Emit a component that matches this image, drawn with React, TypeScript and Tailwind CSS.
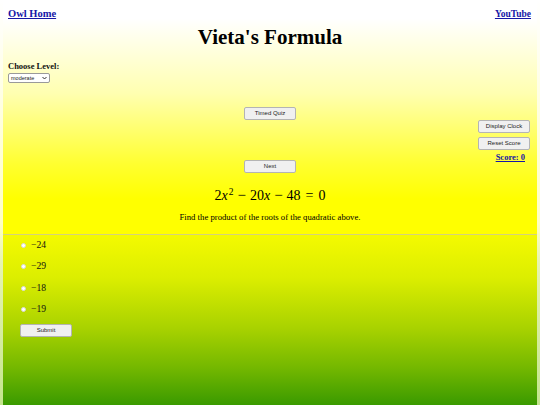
import React from 'react'

const serif = { fontFamily: '"Liberation Serif", "Times New Roman", serif' }

function Btn({ label, className = '' }: { label: string; className?: string }) {
  return (
    <div
      className={`w-[52px] h-[13px] flex items-center justify-center rounded-[2px] border border-[#b4b4b4] bg-[#f0f0f0] text-[6px] text-[#222] ${className}`}
      style={{ fontFamily: '"Liberation Sans", Arial, sans-serif' }}
    >
      {label}
    </div>
  )
}

function Option({ value }: { value: string }) {
  return (
    <div className="flex items-center h-[12px] leading-[12px]">
      <span className="w-[5px] h-[5px] rounded-full bg-white border border-[#d8d8d8] mr-[5px] mt-[1px]" />
      <span className="text-[9.6px] text-[#111]" style={serif}>
        −{value}
      </span>
    </div>
  )
}

export default function App() {
  return (
    <div
      className="w-full h-[405px] overflow-hidden px-[3px] bg-[linear-gradient(to_bottom,#ffffff_0%,#ffffe8_20%,#ffffc4_55%,#e6f4b0_65%,#c4e48e_100%)]"
      style={serif}
    >
      {/* Top: header, level, buttons, question */}
      <div className="h-[234px] bg-[linear-gradient(to_bottom,#ffffff_0%,#ffffff_8%,#ffffb0_40%,#ffff30_70%,#ffff00_85%,#ffff00_100%)]">
        <div className="flex justify-between items-center pt-[8px] pl-[5px] pr-[6px] h-[20px] leading-[12px] font-bold">
          <a className="underline text-[#1616a6] text-[10.5px]">Owl Home</a>
          <a className="underline text-[#1616a6] text-[9.5px]">YouTube</a>
        </div>

        <h1 className="mt-[5px] text-center text-[21px] leading-[24px] font-bold text-black">
          Vieta's Formula
        </h1>

        <div className="pl-[5px] mt-[11.5px]">
          <div className="text-[8.5px] leading-[10px] font-bold text-[#111]">Choose Level:</div>
          <div
            className="mt-[2.5px] w-[42px] h-[10px] flex items-center justify-between px-[2px] bg-white border border-[#9a9a9a] rounded-[2px] text-[5.5px] text-[#222]"
            style={{ fontFamily: '"Liberation Sans", Arial, sans-serif' }}
          >
            <span>moderate</span>
            <svg width="5" height="4" viewBox="0 0 10 8">
              <path d="M1 2 L5 6 L9 2" fill="none" stroke="#333" strokeWidth="2" />
            </svg>
          </div>
        </div>

        <div className="grid grid-cols-[1fr_auto_1fr] mt-[24px]">
          <div />
          <div className="flex flex-col">
            <Btn label="Timed Quiz" />
            <Btn label="Next" className="mt-[40px]" />
          </div>
          <div className="flex flex-col items-end pr-[7px] pt-[13px]">
            <Btn label="Display Clock" />
            <Btn label="Reset Score" className="mt-[4px]" />
            <div className="mt-[2px] pr-[5px] text-[8.5px] leading-[10px] font-bold underline text-[#1616a6]">
              Score: 0
            </div>
          </div>
        </div>

        <div className="mt-[13.5px] text-center text-[14px] leading-[16px] text-black" style={serif}>
          2<i>x</i>
          <span className="text-[9.5px] relative top-[-5px] ml-[1px]">2</span>
          <span className="mx-[4px] text-[15px]">−</span>
          20<i>x</i>
          <span className="mx-[4px] text-[15px]">−</span>
          48
          <span className="mx-[5px]">=</span>0
        </div>

        <div className="mt-[7.5px] text-center text-[8.7px] leading-[10px] text-black" style={serif}>
          Find the product of the roots of the quadratic above.
        </div>
      </div>

      {/* Bottom: answer choices */}
      <div className="h-[171px] border-t border-[#d4d27c] bg-[linear-gradient(to_bottom,#f4fa00_0%,#dcee00_25%,#a8d200_55%,#74b800_78%,#3a9a00_100%)] pl-[18px] pt-[4px]">
        <div className="flex flex-col gap-[9.3px]">
          <Option value="24" />
          <Option value="29" />
          <Option value="18" />
          <Option value="19" />
        </div>
        <Btn label="Submit" className="mt-[9px] ml-[-1px]" />
      </div>
    </div>
  )
}
